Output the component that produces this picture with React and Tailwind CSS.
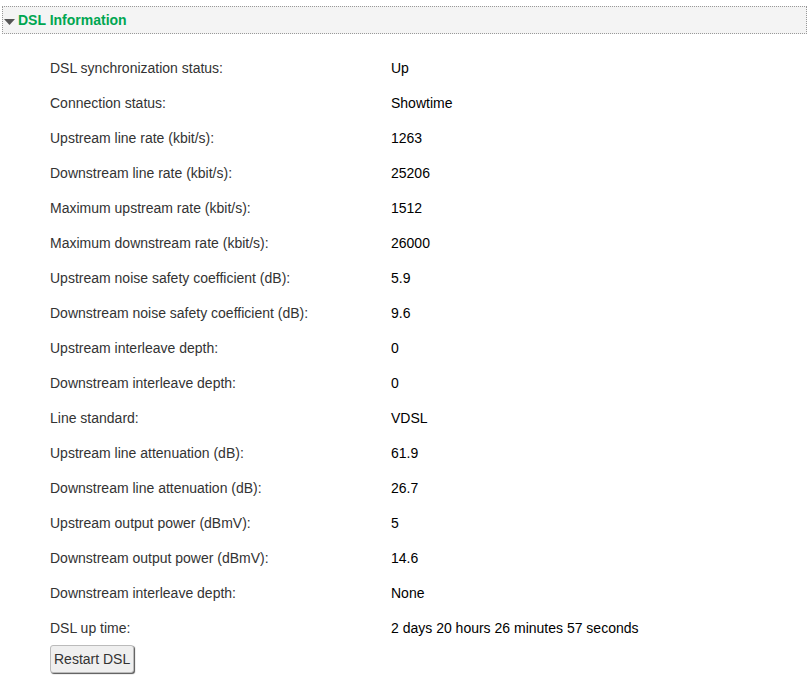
import React from "react";

const rows = [
  ["DSL synchronization status:", "Up"],
  ["Connection status:", "Showtime"],
  ["Upstream line rate (kbit/s):", "1263"],
  ["Downstream line rate (kbit/s):", "25206"],
  ["Maximum upstream rate (kbit/s):", "1512"],
  ["Maximum downstream rate (kbit/s):", "26000"],
  ["Upstream noise safety coefficient (dB):", "5.9"],
  ["Downstream noise safety coefficient (dB):", "9.6"],
  ["Upstream interleave depth:", "0"],
  ["Downstream interleave depth:", "0"],
  ["Line standard:", "VDSL"],
  ["Upstream line attenuation (dB):", "61.9"],
  ["Downstream line attenuation (dB):", "26.7"],
  ["Upstream output power (dBmV):", "5"],
  ["Downstream output power (dBmV):", "14.6"],
  ["Downstream interleave depth:", "None"],
  ["DSL up time:", "2 days 20 hours 26 minutes 57 seconds"],
];

export default function App() {
  return (
    <div className="w-[810px] h-[689px] bg-white font-['Liberation_Sans',Arial,sans-serif] text-[14px] overflow-hidden">
      <div className="pt-[6px] pl-[2px] pr-[3px]">
        <div className="h-[28px] border border-dotted border-[#999] bg-[#f4f4f4] flex items-center">
          <svg width="11" height="7" viewBox="0 0 11 7" className="ml-[1px] mt-[4px]">
            <polygon points="0,0 11,0 5.5,6" fill="#555" />
          </svg>
          <span className="ml-[3px] font-bold text-[#00a651] text-[14px]">DSL Information</span>
        </div>
      </div>

      <div className="pl-[50px] pt-[17px]">
        {rows.map(([label, value], i) => (
          <div key={i} className="flex h-[35px] items-start">
            <div className="w-[341px] text-[#333] leading-[35px]">{label}</div>
            <div className="text-black leading-[35px]">{value}</div>
          </div>
        ))}
        <button className="-mt-[1px] h-[28px] px-[3px] text-[14px] text-[#333] bg-[#efefef] border border-[#bbb] rounded-[3px] shadow-[1px_1px_1px_#555]">
          Restart DSL
        </button>
      </div>
    </div>
  );
}
